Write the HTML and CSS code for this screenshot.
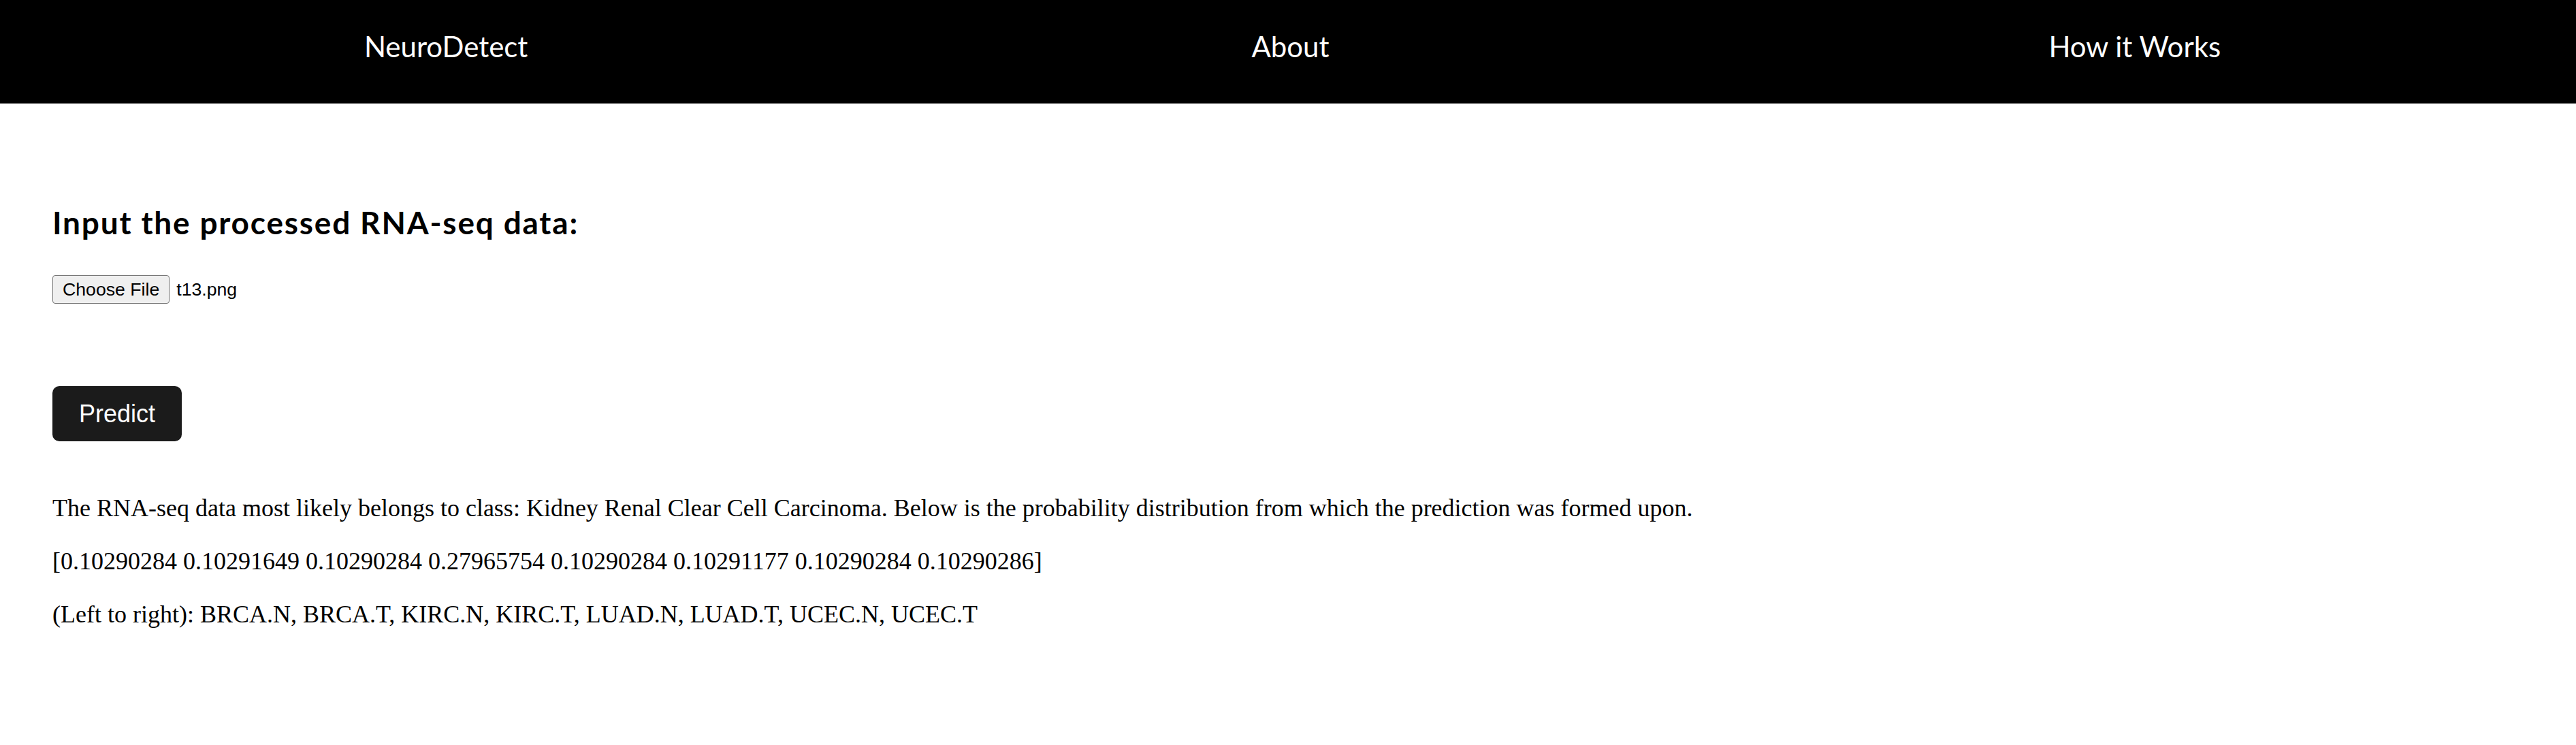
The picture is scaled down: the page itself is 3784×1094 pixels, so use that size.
FILE: index.html
```html
<!DOCTYPE html>
<html lang="en">
<head>
<meta charset="utf-8">
<title>NeuroDetect</title>
<link rel="stylesheet" href="styles.css">
</head>
<body>
<nav class="topbar">
  <a class="navlink" href="#">NeuroDetect</a>
  <a class="navlink" href="#">About</a>
  <a class="navlink" href="#">How it Works</a>
</nav>
<main class="content">
  <h2 class="title">Input the processed RNA-seq data:</h2>
  <div class="file-row">
    <button class="file-btn" type="button">Choose File</button>
    <span class="file-name">t13.png</span>
  </div>
  <button class="predict-btn" type="button">Predict</button>
  <section class="result">
    <p class="result-line">The RNA-seq data most likely belongs to class: Kidney Renal Clear Cell Carcinoma. Below is the probability distribution from which the prediction was formed upon.</p>
    <p class="result-line">[0.10290284 0.10291649 0.10290284 0.27965754 0.10290284 0.10291177 0.10290284 0.10290286]</p>
    <p class="result-line">(Left to right): BRCA.N, BRCA.T, KIRC.N, KIRC.T, LUAD.N, LUAD.T, UCEC.N, UCEC.T</p>
  </section>
</main>
</body>
</html>
```

FILE: styles.css
```css
html, body {
  margin: 0;
  padding: 0;
  background: #ffffff;
}

.topbar {
  display: flex;
  align-items: center;
  height: 152px;
  box-sizing: border-box;
  padding: 0 28px 16px 35px;
  background: #000000;
}

.navlink {
  flex: 1;
  text-align: center;
  color: #ffffff;
  text-decoration: none;
  font-family: "Trebuchet MS", Lato, "Open Sans", sans-serif;
  font-size: 42px;
}

.content {
  display: flex;
  flex-direction: column;
  align-items: flex-start;
  padding: 0 77px;
}

.title {
  margin: 147px 0 0 0;
  font-family: "Trebuchet MS", Lato, "Open Sans", sans-serif;
  font-weight: 700;
  font-size: 46px;
  letter-spacing: 1.8px;
  line-height: normal;
  color: #000000;
}

.file-row {
  display: flex;
  align-items: center;
  gap: 10px;
  margin-top: 50px;
  font-family: "Liberation Sans", Arial, sans-serif;
  font-size: 26.67px;
}

.file-btn {
  height: 42px;
  box-sizing: border-box;
  padding: 0 14px;
  border: 1px solid #767676;
  border-radius: 4px;
  background: #efefef;
  color: #000000;
  font-family: "Liberation Sans", Arial, sans-serif;
  font-size: 26.67px;
}

.file-name {
  color: #000000;
}

.predict-btn {
  margin-top: 121px;
  width: 190px;
  height: 81px;
  box-sizing: border-box;
  padding: 0;
  border: none;
  border-radius: 10px;
  background: #1b1b1b;
  color: #ffffff;
  font-family: "Liberation Sans", Arial, sans-serif;
  font-size: 36px;
}

.result {
  display: flex;
  flex-direction: column;
  gap: 37px;
  margin-top: 78px;
}

.result-line {
  margin: 0;
  font-family: "Liberation Serif", "Times New Roman", serif;
  font-size: 36px;
  line-height: 41px;
  color: #000000;
}
```
